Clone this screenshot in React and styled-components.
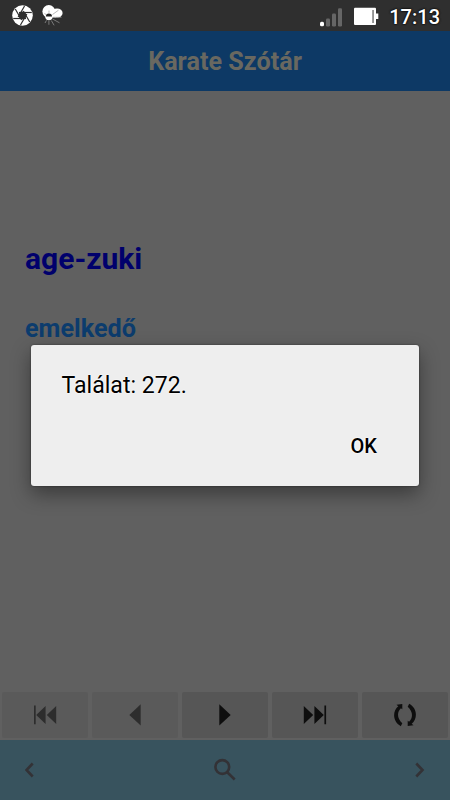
import React from "react";
import styled, { createGlobalStyle } from "styled-components";

function App() {
  return (
    <Screen>
      <GlobalStyle />
      <StatusBar>
        <StatusGroup $gap="9px">
          <ShutterIcon />
          <WeatherIcon />
        </StatusGroup>
        <StatusGroup $gap="12px">
          <SignalIcon />
          <BatteryIcon />
          <Clock>17:13</Clock>
        </StatusGroup>
      </StatusBar>
      <Header>Karate Szótár</Header>
      <Content>
        <Word>age-zuki</Word>
        <Meaning>emelkedő</Meaning>
      </Content>
      <Controls>
        <ControlButton aria-label="Első" $disabled>
          <svg width="24" height="24" viewBox="0 0 24 24">
            <path d="M1 2.600h1.700v18.600H1zM12.600 3v18L3.200 12zM23.200 3v18L13.800 12z" />
          </svg>
        </ControlButton>
        <ControlButton aria-label="Előző" $disabled>
          <svg width="24" height="24" viewBox="0 0 24 24">
            <path d="M17.700 1.300v21.200L6.300 12z" />
          </svg>
        </ControlButton>
        <ControlButton aria-label="Következő">
          <svg width="24" height="24" viewBox="0 0 24 24">
            <path d="M6.300 1.300v21.200L17.700 12z" />
          </svg>
        </ControlButton>
        <ControlButton aria-label="Utolsó">
          <svg width="24" height="24" viewBox="0 0 24 24">
            <path d="M.8 3v18l9.400-9zM11.400 3v18l9.400-9zM21.400 2.600h1.700v18.600h-1.700z" />
          </svg>
        </ControlButton>
        <ControlButton aria-label="Véletlen">
          <svg width="24" height="24" viewBox="0 0 24 24">
            <path d="M3.500 1.700L9.300 1v5.200L7.900 5.200C3.900 9 3.800 15.200 9.300 20.200L7.800 23.200C-.6 18.600-.7 8.200 5.300 3.300z" />
            <path d="M20.500 22.300L14.700 23v-5.200l1.400 1c4-3.800 4.100-10-1.400-15L16.200.8c8.400 4.600 8.500 15 2.500 19.900z" />
          </svg>
        </ControlButton>
      </Controls>
      <BottomBar>
        <NavButton aria-label="Vissza">
          <svg width="10" height="16" viewBox="0 0 10 16">
            <path d="M7.700 1.500L1.500 8l6.200 6.500" />
          </svg>
        </NavButton>
        <NavButton aria-label="Keresés">
          <svg width="24" height="24" viewBox="0 0 24 24">
            <circle cx="9.300" cy="9" r="6.900" />
            <path d="M14 14l7.700 7.500" />
          </svg>
        </NavButton>
        <NavButton aria-label="Előre">
          <svg width="10" height="16" viewBox="0 0 10 16">
            <path d="M1.300 1.500L7.500 8l-6.200 6.500" />
          </svg>
        </NavButton>
      </BottomBar>
      <Dialog role="dialog">
        <Message>Találat: 272.</Message>
        <OkButton>OK</OkButton>
      </Dialog>
    </Screen>
  );
}

function ShutterIcon() {
  return (
    <svg width="21" height="22" viewBox="0 0 21 22">
      <circle cx="10.500" cy="10.500" r="10.300" fill="#fff" />
      <path d="M10.500 6.500L14 8.500v4l-3.500 2-3.500-2v-4z" fill="#2f2f2f" />
      {[0, 60, 120, 180, 240, 300].map((angle) => (
        <path
          key={angle}
          d="M7 7.500H19.800"
          stroke="#2f2f2f"
          strokeWidth="1.200"
          transform={`rotate(${angle} 10.500 10.500)`}
        />
      ))}
    </svg>
  );
}

function WeatherIcon() {
  return (
    <svg width="22" height="22" viewBox="0 0 22 22">
      <g fill="#fff">
        <circle cx="6.800" cy="6.500" r="6.400" />
        <ellipse cx="15" cy="8" rx="5.600" ry="4.600" />
        <path d="M5 4h9v8.500H7z" />
        <circle cx="6.900" cy="11.500" r="3.700" />
      </g>
      <path d="M3.800 11.500a3.100 3.100 0 0 1 6.200 0z" fill="#222" />
      <g fill="none" stroke="#999" strokeWidth=".7">
        <path d="M10.500 9.500l6-4.300M11 12.300h8.500M2.500 8.500l2 1.300M7 5.500v2.300" />
        <path d="M10.500 14l7 3.800M9.300 15.500l2.800 4.800M6.900 16v3.800M4.500 15.300L3 18" />
      </g>
    </svg>
  );
}

function SignalIcon() {
  return (
    <svg width="22" height="22" viewBox="0 0 22 22">
      <rect x="0" y="16.800" width="4" height="4.500" rx="1.500" fill="#fff" />
      <g fill="#666">
        <rect x="6" y="13.500" width="4" height="8" rx="1.200" />
        <rect x="12" y="8.500" width="4" height="13" rx="1.200" />
        <rect x="18" y="3.200" width="4" height="18.300" rx="1.200" />
      </g>
    </svg>
  );
}

function BatteryIcon() {
  return (
    <svg width="25" height="22" viewBox="0 0 25 22">
      <rect x="0" y="2.700" width="22" height="17.300" rx="1" fill="#fff" />
      <path d="M21.500 8.500h2.800V14h-2.800z" fill="#fff" />
      <path d="M18.300 5h1.500v13h-1.500z" fill="#777" />
    </svg>
  );
}

const GlobalStyle = createGlobalStyle`
  * {
    box-sizing: border-box;
  }
  body {
    margin: 0;
    font-family: Roboto, "Noto Sans", sans-serif;
  }
  svg {
    display: block;
  }
`;

const Screen = styled.div`
  position: relative;
  display: flex;
  flex-direction: column;
  width: 450px;
  height: 800px;
  overflow: hidden;
  background-color: #606060;
`;

const StatusBar = styled.div`
  display: flex;
  justify-content: space-between;
  height: 31px;
  padding: 5px 10px 0 12px;
  background-color: #2f2f2f;
`;

const StatusGroup = styled.div`
  display: flex;
  align-items: flex-start;
  gap: ${({ $gap }) => $gap};
`;

const Clock = styled.span`
  margin-left: -2px;
  color: #fff;
  font-size: 20px;
  font-weight: 500;
  line-height: 24px;
  text-shadow: 0 0 2px #000, 0 0 2px #000;
`;

const Header = styled.header`
  height: 60px;
  background-color: #0d3965;
  color: #696860;
  font-size: 25.200px;
  font-weight: 700;
  line-height: 61px;
  text-align: center;
`;

const Content = styled.main`
  flex: 1;
  padding: 150px 25px 0;
`;

const Word = styled.h1`
  margin: 0 0 35px;
  color: #00006c;
  font-size: 30px;
  font-weight: 700;
  line-height: 36px;
`;

const Meaning = styled.p`
  margin: 0;
  color: #0c3c6d;
  font-size: 25.200px;
  font-weight: 700;
  line-height: 34px;
`;

const Controls = styled.div`
  display: grid;
  grid-template-columns: repeat(5, 1fr);
  gap: 4px;
  padding: 0 2px 2px;
`;

const ControlButton = styled.button`
  display: flex;
  justify-content: center;
  align-items: center;
  height: 46px;
  padding: 0;
  border: 0;
  border-radius: 2px;
  background-color: ${({ $disabled }) => ($disabled ? "#5a5a5a" : "#565656")};
  svg {
    fill: ${({ $disabled }) => ($disabled ? "#2d2d2d" : "#0e0e0e")};
  }
`;

const BottomBar = styled.nav`
  display: flex;
  justify-content: space-between;
  align-items: center;
  height: 60px;
  padding: 0 25px;
  background-color: #38535e;
`;

const NavButton = styled.button`
  padding: 0;
  border: 0;
  background: none;
  svg {
    fill: none;
    stroke: #333236;
    stroke-width: 2.6;
  }
`;

const Dialog = styled.div`
  position: absolute;
  top: 345px;
  left: 31px;
  display: flex;
  flex-direction: column;
  justify-content: space-between;
  width: 388px;
  height: 141px;
  padding: 27px 42px 27px 30.500px;
  border-radius: 3px;
  background-color: #eee;
  box-shadow: 0 8px 20px rgba(0, 0, 0, 0.4), 0 0 2px rgba(0, 0, 0, 0.5);
  color: #000;
  text-shadow: 0 0 2px #fff, 0 0 2px #fff;
`;

const Message = styled.p`
  margin: 0;
  font-size: 23.100px;
  line-height: 28px;
`;

const OkButton = styled.button`
  align-self: flex-end;
  padding: 0;
  border: 0;
  background: none;
  color: inherit;
  font-family: inherit;
  font-size: 20px;
  font-weight: 500;
  line-height: 26px;
  text-shadow: inherit;
`;

export default App;
